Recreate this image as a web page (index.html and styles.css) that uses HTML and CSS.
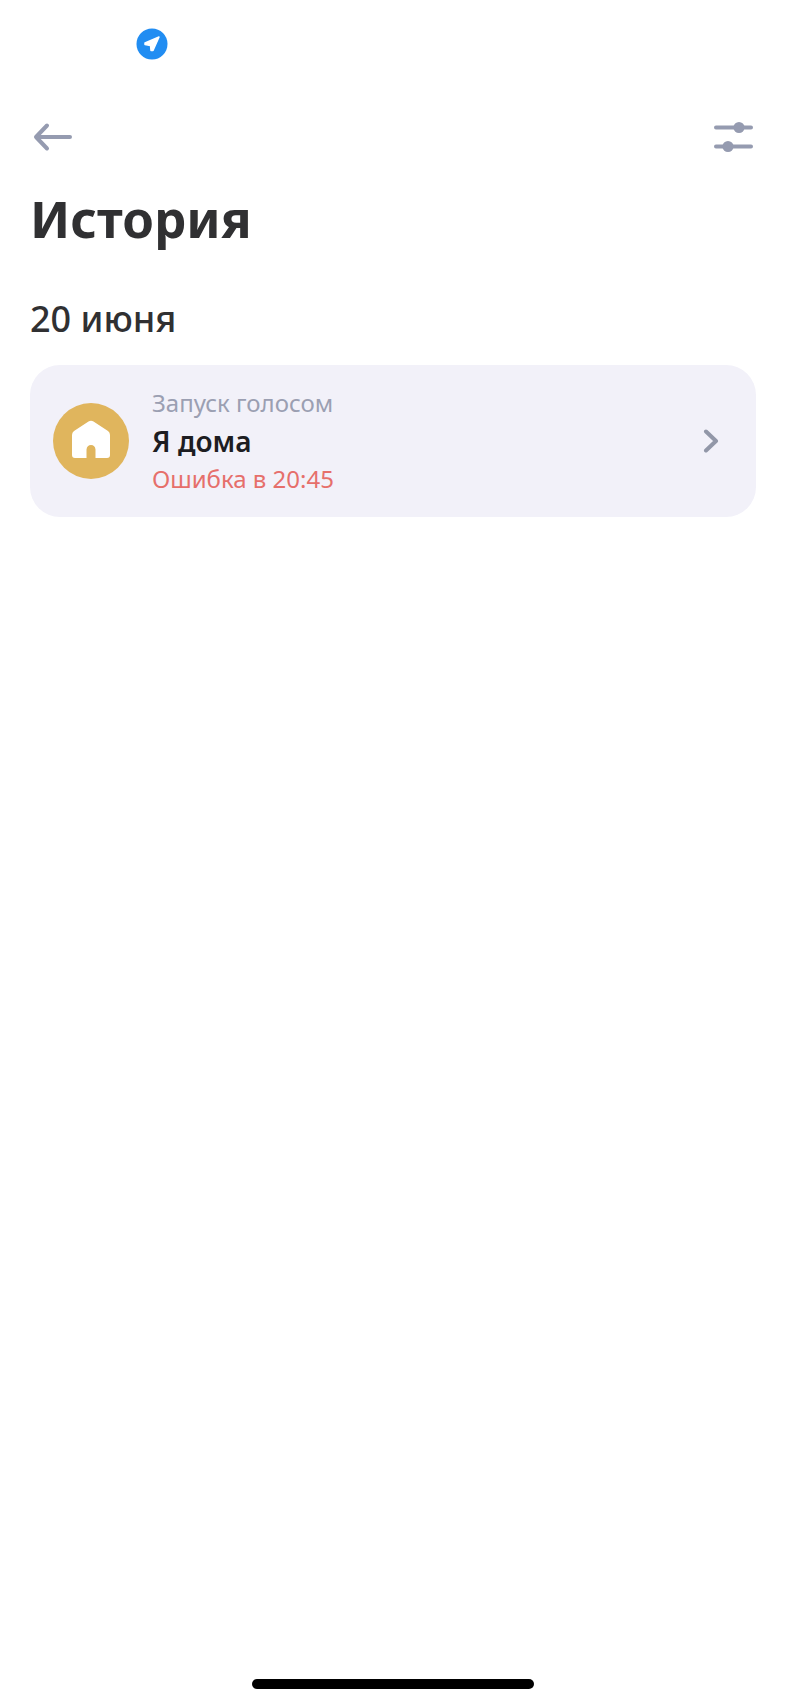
FILE: index.html
```html
<!DOCTYPE html>
<html lang="ru">
<head>
    <meta charset="UTF-8">
    <meta name="viewport" content="width=device-width, initial-scale=1.0">
    <title>История</title>
    <link rel="stylesheet" href="styles.css">
</head>
<body>
    <div class="status-bar">
        <svg class="location" viewBox="0 0 32 32">
            <circle cx="16" cy="16" r="15.5" fill="#218df2"/>
            <path d="M23 9 L17 22.500 L15 22.500 L14.500 17.500 L9 16.500 L9 15 Z" fill="#fff" stroke="#fff" stroke-width="1.5" stroke-linejoin="round"/>
        </svg>
    </div>

    <header class="toolbar">
        <button class="icon-button" aria-label="Назад">
            <svg viewBox="0 0 40 32">
                <path d="M38 16 H4 M15 4.500 L4 16 L15 27.500"/>
            </svg>
        </button>
        <button class="icon-button" aria-label="Фильтр">
            <svg viewBox="0 0 40 32">
                <path d="M2 6.500 H37 M2 25.500 H37"/>
                <circle cx="25" cy="6.500" r="5.500"/>
                <circle cx="14" cy="25.500" r="5.500"/>
            </svg>
        </button>
    </header>

    <main class="content">
        <h1 class="title">История</h1>
        <h2 class="date">20 июня</h2>
        <a class="card" href="#">
            <svg class="home-icon" viewBox="0 0 76 76">
                <circle cx="38" cy="38" r="38" fill="#e0b55d"/>
                <path d="M35.500 18.500 Q38 17 40.500 18.500 L55 28 Q57 29.500 57 32 V52 Q57 55 54 55 H42.500 V46.500 Q42 42 38 42 Q34 42 33.500 46.500 V55 H22 Q19 55 19 52 V32 Q19 29.500 21 28 Z" fill="#fff"/>
            </svg>
            <span class="info">
                <span class="source">Запуск голосом</span>
                <span class="name">Я дома</span>
                <span class="error">Ошибка в 20:45</span>
            </span>
            <svg class="chevron" viewBox="0 0 16 24">
                <path d="M3 2.500 L13 12 L3 21.500"/>
            </svg>
        </a>
    </main>

    <div class="home-indicator"></div>
</body>
</html>
```

FILE: styles.css
```css
* {
    box-sizing: border-box;
}
body {
    display: flex;
    flex-direction: column;
    min-height: 100vh;
    margin: 0;
    background: #fff;
    color: #303032;
    font-family: 'Noto Sans', sans-serif;
}
.status-bar {
    display: flex;
    align-items: center;
    height: 88px;
    padding: 0 136px;
}
.location {
    width: 32px;
    height: 32px;
}
.toolbar {
    display: flex;
    justify-content: space-between;
    align-items: center;
    height: 98px;
    padding: 0 32px;
}
.icon-button {
    display: block;
    padding: 0;
    border: none;
    background: none;
    cursor: pointer;
}
.icon-button svg {
    display: block;
    width: 40px;
    height: 32px;
    fill: #959bb0;
}
.icon-button path {
    fill: none;
    stroke: #959bb0;
    stroke-width: 4;
    stroke-linecap: round;
    stroke-linejoin: round;
}
.content {
    padding: 0 30px;
}
.title {
    margin: 0;
    font-size: 51px;
    line-height: 64px;
    font-weight: 700;
}
.date {
    margin: 45px 0 22px;
    font-size: 36px;
    line-height: 48px;
    font-weight: 500;
}
.card {
    display: flex;
    align-items: center;
    gap: 23px;
    padding: 19px 37px 19px 23px;
    border-radius: 30px;
    background: #f2f1f9;
    text-decoration: none;
}
.home-icon {
    flex: none;
    width: 76px;
    height: 76px;
}
.info {
    display: flex;
    flex: 1;
    flex-direction: column;
    font-size: 24px;
    line-height: 38px;
}
.source {
    color: #9b9fb2;
}
.name {
    color: #1d1d22;
    font-size: 28px;
    font-weight: 600;
}
.error {
    color: #e66f6b;
}
.chevron {
    flex: none;
    width: 16px;
    height: 24px;
    fill: none;
    stroke: #9297a8;
    stroke-width: 4;
    stroke-linecap: round;
    stroke-linejoin: round;
}
.home-indicator {
    width: 36%;
    height: 10px;
    margin: auto auto 15px;
    border-radius: 5px;
    background: #000;
}
```
